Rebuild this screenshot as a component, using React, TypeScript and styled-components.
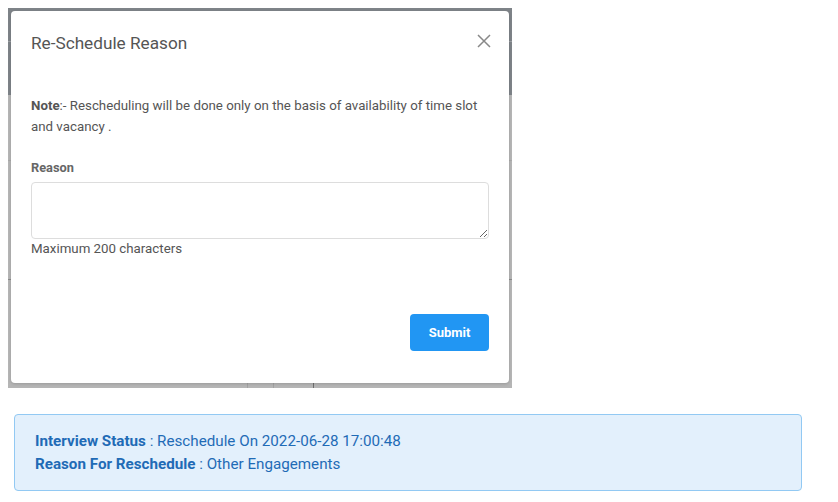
import React, { useState } from "react";
import styled, { createGlobalStyle } from "styled-components";

const GlobalStyle = createGlobalStyle`
  html, body {
    margin: 0;
    padding: 0;
    background: #ffffff;
    font-family: Roboto, "Liberation Sans", Arial, sans-serif;
  }
  * { box-sizing: border-box; }
`;

const Page = styled.div`
  padding: 8px;
  width: 838px;
  height: 502px;
`;

// faded page behind the dialog, as seen through the backdrop
const Backdrop = styled.div`
  width: 504px;
  height: 380px;
  padding: 3px 3px 5px 3px;
  background:
    linear-gradient(#9ca0a4, #9ca0a4) 0 33px / 100% 1px no-repeat,
    linear-gradient(#a9a9a9, #a9a9a9) 0 152px / 100% 1px no-repeat,
    linear-gradient(#8a8a8a, #8a8a8a) 0 271px / 100% 1px no-repeat,
    linear-gradient(#a2a2a2, #a2a2a2) 239px 375px / 1px 5px no-repeat,
    linear-gradient(#a2a2a2, #a2a2a2) 265px 375px / 1px 5px no-repeat,
    linear-gradient(#6e6e6e, #6e6e6e) 305px 375px / 1px 5px no-repeat,
    linear-gradient(#7e8388 0, #7e8388 87px, #b5b5b5 87px, #b5b5b5 100%);
`;

const Modal = styled.div`
  background: #ffffff;
  border-radius: 4px;
  height: 372px;
  box-shadow: 0 1px 3px rgba(0, 0, 0, 0.15);
  display: flex;
  flex-direction: column;
`;

const ModalHeader = styled.div`
  display: flex;
  justify-content: space-between;
  align-items: flex-start;
  padding: 21px 18px 0 20px;
  height: 64px;
`;

const Title = styled.h4`
  margin: 0;
  font-size: 17.2px;
  font-weight: 400;
  color: #555555;
  line-height: 22px;
`;

const CloseButton = styled.button`
  border: none;
  background: transparent;
  padding: 0;
  margin-top: 2px;
  cursor: pointer;
  display: flex;
`;

const ModalBody = styled.div`
  padding: 20px 20px 0 20px;
  flex: 1;
`;

const Note = styled.p`
  margin: 0;
  font-size: 13.3px;
  line-height: 21px;
  color: #555555;
  b {
    font-weight: 700;
  }
`;

const Label = styled.label`
  display: block;
  margin-top: 22px;
  font-size: 12.8px;
  font-weight: 700;
  color: #666666;
  line-height: 18px;
`;

const TextArea = styled.textarea`
  display: block;
  width: 458px;
  height: 57px;
  margin-top: 5px;
  border: 1px solid #dddddd;
  border-radius: 4px;
  resize: vertical;
  font-family: inherit;
  font-size: 13px;
  padding: 6px 8px;
  outline: none;
`;

const Hint = styled.div`
  font-size: 13.3px;
  color: #555555;
  line-height: 18px;
  margin-top: 1px;
`;

const ModalFooter = styled.div`
  display: flex;
  justify-content: flex-end;
  padding: 0 20px 32px 20px;
`;

const SubmitButton = styled.button`
  width: 79px;
  height: 37px;
  border: none;
  border-radius: 4px;
  background: #2196f3;
  color: #ffffff;
  font-family: inherit;
  font-size: 13px;
  font-weight: 700;
  cursor: pointer;
`;

const StatusBox = styled.div`
  margin: 26px 0 0 6px;
  width: 788px;
  height: 77px;
  padding: 15px 20px;
  background: #e3f0fc;
  border: 1px solid #92c9f3;
  border-radius: 4px;
  color: #1f6bb6;
  font-size: 15.2px;
  line-height: 23px;
`;

const StatusRow = styled.div`
  b {
    font-weight: 700;
  }
`;

export default function App() {
  const [reason, setReason] = useState("");
  return (
    <>
      <GlobalStyle />
      <Page>
        <Backdrop>
          <Modal>
            <ModalHeader>
              <Title>Re-Schedule Reason</Title>
              <CloseButton aria-label="close">
                <svg width="14" height="14" viewBox="0 0 14 14">
                  <path d="M1 1 L13 13 M13 1 L1 13" stroke="#888888" strokeWidth="1.5" fill="none" />
                </svg>
              </CloseButton>
            </ModalHeader>
            <ModalBody>
              <Note>
                <b>Note</b>:- Rescheduling will be done only on the basis of availability of time slot and vacancy .
              </Note>
              <Label>Reason</Label>
              <TextArea value={reason} maxLength={200} onChange={(e) => setReason(e.target.value)} />
              <Hint>Maximum 200 characters</Hint>
            </ModalBody>
            <ModalFooter>
              <SubmitButton>Submit</SubmitButton>
            </ModalFooter>
          </Modal>
        </Backdrop>
        <StatusBox>
          <StatusRow>
            <b>Interview Status</b> : Reschedule On 2022-06-28 17:00:48
          </StatusRow>
          <StatusRow>
            <b>Reason For Reschedule</b> : Other Engagements
          </StatusRow>
        </StatusBox>
      </Page>
    </>
  );
}
